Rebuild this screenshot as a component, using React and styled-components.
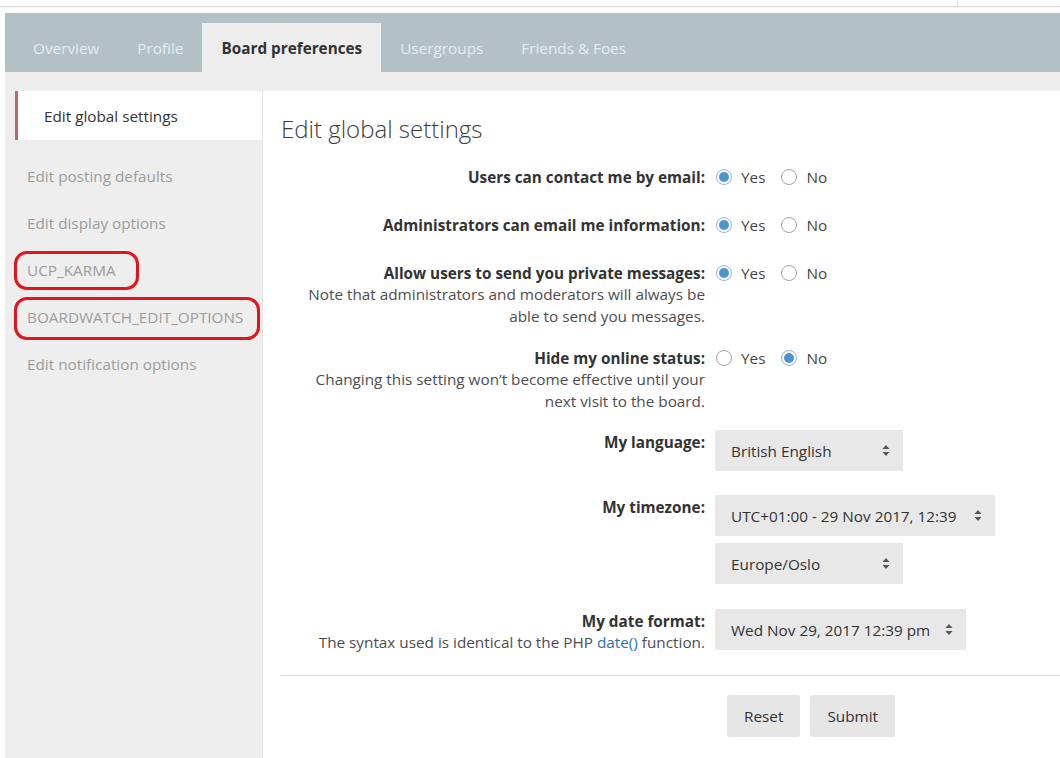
import styled, { createGlobalStyle } from 'styled-components';

const GlobalStyle = createGlobalStyle`
  html, body {
    margin: 0;
    padding: 0;
    background: #ffffff;
    overflow: hidden;
  }
  body {
    font-family: 'Open Sans', 'Noto Sans', 'Liberation Sans', sans-serif;
    font-size: 15.3px;
    color: #333333;
  }
`;

const tabs = ['Overview', 'Profile', 'Board preferences', 'Usergroups', 'Friends & Foes'];

const menu = [
  { label: 'Edit posting defaults' },
  { label: 'Edit display options' },
  { label: 'UCP_KARMA', ring: { left: 9, top: 4, width: 125, height: 39 } },
  { label: 'BOARDWATCH_EDIT_OPTIONS', ring: { left: 9, top: 3, width: 246, height: 43 } },
  { label: 'Edit notification options' },
];

const Page = styled.div`
  width: 1060px;
  height: 758px;
  display: flex;
  flex-direction: column;
`;

const TopStrip = styled.div`
  height: 6px;
  display: flex;
  justify-content: flex-end;
  border-bottom: 1px solid #dcdcdc;
  box-shadow: 0 1px 2px rgba(0, 0, 0, 0.06);
  margin-bottom: 6px;
`;

const TopDivider = styled.div`
  width: 102px;
  border-left: 1px solid #e2e2e2;
`;

const Frame = styled.div`
  flex: 1;
  margin-left: 5px;
  display: flex;
  flex-direction: column;
  min-height: 0;
`;

const TabBar = styled.div`
  height: 59px;
  background: #b3c1c7;
  display: flex;
  align-items: flex-end;
  padding-left: 9px;
`;

const Tab = styled.div`
  height: 49px;
  line-height: 50px;
  padding: 0 19px;
  color: ${(p) => (p.$active ? '#333333' : '#e6ecee')};
  font-weight: ${(p) => (p.$active ? 700 : 400)};
  background: ${(p) => (p.$active ? '#eeeeee' : 'transparent')};
`;

const Band = styled.div`
  height: 19px;
  background: #eeeeee;
`;

const Body = styled.div`
  flex: 1;
  display: flex;
  min-height: 0;
`;

const Sidebar = styled.div`
  width: 257px;
  background: #eeeeee;
  border-right: 1px solid #e6e6e6;
`;

const ActiveItem = styled.div`
  margin-left: 10px;
  height: 49px;
  line-height: 51px;
  padding-left: 26px;
  border-left: 3px solid #c4646d;
  background: #ffffff;
  color: #333333;
  margin-bottom: 13px;
`;

const MenuItem = styled.div`
  position: relative;
  height: 47px;
  line-height: 47px;
  padding-left: 22px;
  color: #9c9c9c;
`;

const Ring = styled.span`
  position: absolute;
  border: 3px solid #e3141c;
  border-radius: 13px;
  box-sizing: border-box;
  pointer-events: none;
`;

const Main = styled.div`
  flex: 1;
  background: #ffffff;
  padding: 22px 0 0 18px;
`;

const Heading = styled.h2`
  margin: 0 0 20px;
  font-size: 24px;
  line-height: 32px;
  font-weight: 300;
  color: #3c3c3c;
`;

const Row = styled.div`
  display: grid;
  grid-template-columns: 424px auto;
  column-gap: 10px;
  margin-bottom: ${(p) => p.$after}px;
`;

const Term = styled.div`
  text-align: right;
  padding-top: 2px;
`;

const Label = styled.div`
  font-weight: 700;
  line-height: 20px;
  color: #333333;
`;

const Explain = styled.div`
  line-height: 22px;
  color: #4d4d4d;
`;

const Link = styled.a`
  color: #2f70b3;
  text-decoration: none;
`;

const Field = styled.div`
  display: flex;
  flex-direction: column;
  gap: 7px;
`;

const Radios = styled.div`
  display: flex;
  align-items: center;
  height: 24px;
`;

const RadioLabel = styled.label`
  display: flex;
  align-items: center;
  gap: 9px;
  margin-right: 15px;
  color: #444444;
`;

const RadioDot = styled.span`
  width: 16px;
  height: 16px;
  box-sizing: border-box;
  border-radius: 50%;
  border: 1px solid ${(p) => (p.$on ? '#8eb5d6' : '#a3a3a3')};
  background: #ffffff;
  display: flex;
  align-items: center;
  justify-content: center;
  margin-left: 1px;

  &::after {
    content: '';
    width: 10px;
    height: 10px;
    border-radius: 50%;
    background: ${(p) => (p.$on ? '#4b95cb' : 'transparent')};
  }
`;

const Select = styled.div`
  width: ${(p) => p.$w}px;
  height: 41px;
  box-sizing: border-box;
  background: #e8e8e8;
  display: flex;
  align-items: center;
  justify-content: space-between;
  padding: 0 13px 0 16px;
  color: #333333;
`;

const Buttons = styled.div`
  border-top: 1px solid #dddddd;
  margin-top: 22px;
  padding: 19px 0 0 446px;
  display: flex;
  gap: 10px;
`;

const Button = styled.button`
  height: 42px;
  padding: 0 17px;
  border: 0;
  border-radius: 2px;
  background: #e6e6e6;
  font: inherit;
  color: #333333;
`;

const Arrows = () => (
  <svg width="8" height="13" viewBox="0 0 8 13">
    <path d="M4 1 L7.5 5 H0.5 Z" fill="#555" />
    <path d="M4 12 L7.5 8 H0.5 Z" fill="#555" />
  </svg>
);

const Radio = ({ on, children }) => (
  <RadioLabel>
    <RadioDot $on={on} />
    {children}
  </RadioLabel>
);

const YesNo = ({ yes }) => (
  <Radios>
    <Radio on={yes}>Yes</Radio>
    <Radio on={!yes}>No</Radio>
  </Radios>
);

const Dropdown = ({ w, children }) => (
  <Select $w={w}>
    <span>{children}</span>
    <Arrows />
  </Select>
);

export default function App() {
  return (
    <Page>
      <GlobalStyle />
      <TopStrip>
        <TopDivider />
      </TopStrip>
      <Frame>
        <TabBar>
          {tabs.map((t) => (
            <Tab key={t} $active={t === 'Board preferences'}>
              {t}
            </Tab>
          ))}
        </TabBar>
        <Band />
        <Body>
          <Sidebar>
            <ActiveItem>Edit global settings</ActiveItem>
            {menu.map((m) => (
              <MenuItem key={m.label}>
                {m.label}
                {m.ring && <Ring style={m.ring} />}
              </MenuItem>
            ))}
          </Sidebar>
          <Main>
            <Heading>Edit global settings</Heading>

            <Row $after={24}>
              <Term>
                <Label>Users can contact me by email:</Label>
              </Term>
              <YesNo yes />
            </Row>

            <Row $after={24}>
              <Term>
                <Label>Administrators can email me information:</Label>
              </Term>
              <YesNo yes />
            </Row>

            <Row $after={19}>
              <Term>
                <Label>Allow users to send you private messages:</Label>
                <Explain>
                  Note that administrators and moderators will always be
                  <br />
                  able to send you messages.
                </Explain>
              </Term>
              <YesNo yes />
            </Row>

            <Row $after={18}>
              <Term>
                <Label>Hide my online status:</Label>
                <Explain>
                  Changing this setting won’t become effective until your
                  <br />
                  next visit to the board.
                </Explain>
              </Term>
              <YesNo yes={false} />
            </Row>

            <Row $after={24}>
              <Term>
                <Label>My language:</Label>
              </Term>
              <Field>
                <Dropdown w={188}>British English</Dropdown>
              </Field>
            </Row>

            <Row $after={25}>
              <Term>
                <Label>My timezone:</Label>
              </Term>
              <Field>
                <Dropdown w={280}>UTC+01:00 - 29 Nov 2017, 12:39</Dropdown>
                <Dropdown w={188}>Europe/Oslo</Dropdown>
              </Field>
            </Row>

            <Row $after={0}>
              <Term>
                <Label>My date format:</Label>
                <Explain>
                  The syntax used is identical to the PHP <Link href="#">date()</Link> function.
                </Explain>
              </Term>
              <Field>
                <Dropdown w={251}>Wed Nov 29, 2017 12:39 pm</Dropdown>
              </Field>
            </Row>

            <Buttons>
              <Button>Reset</Button>
              <Button>Submit</Button>
            </Buttons>
          </Main>
        </Body>
      </Frame>
    </Page>
  );
}
